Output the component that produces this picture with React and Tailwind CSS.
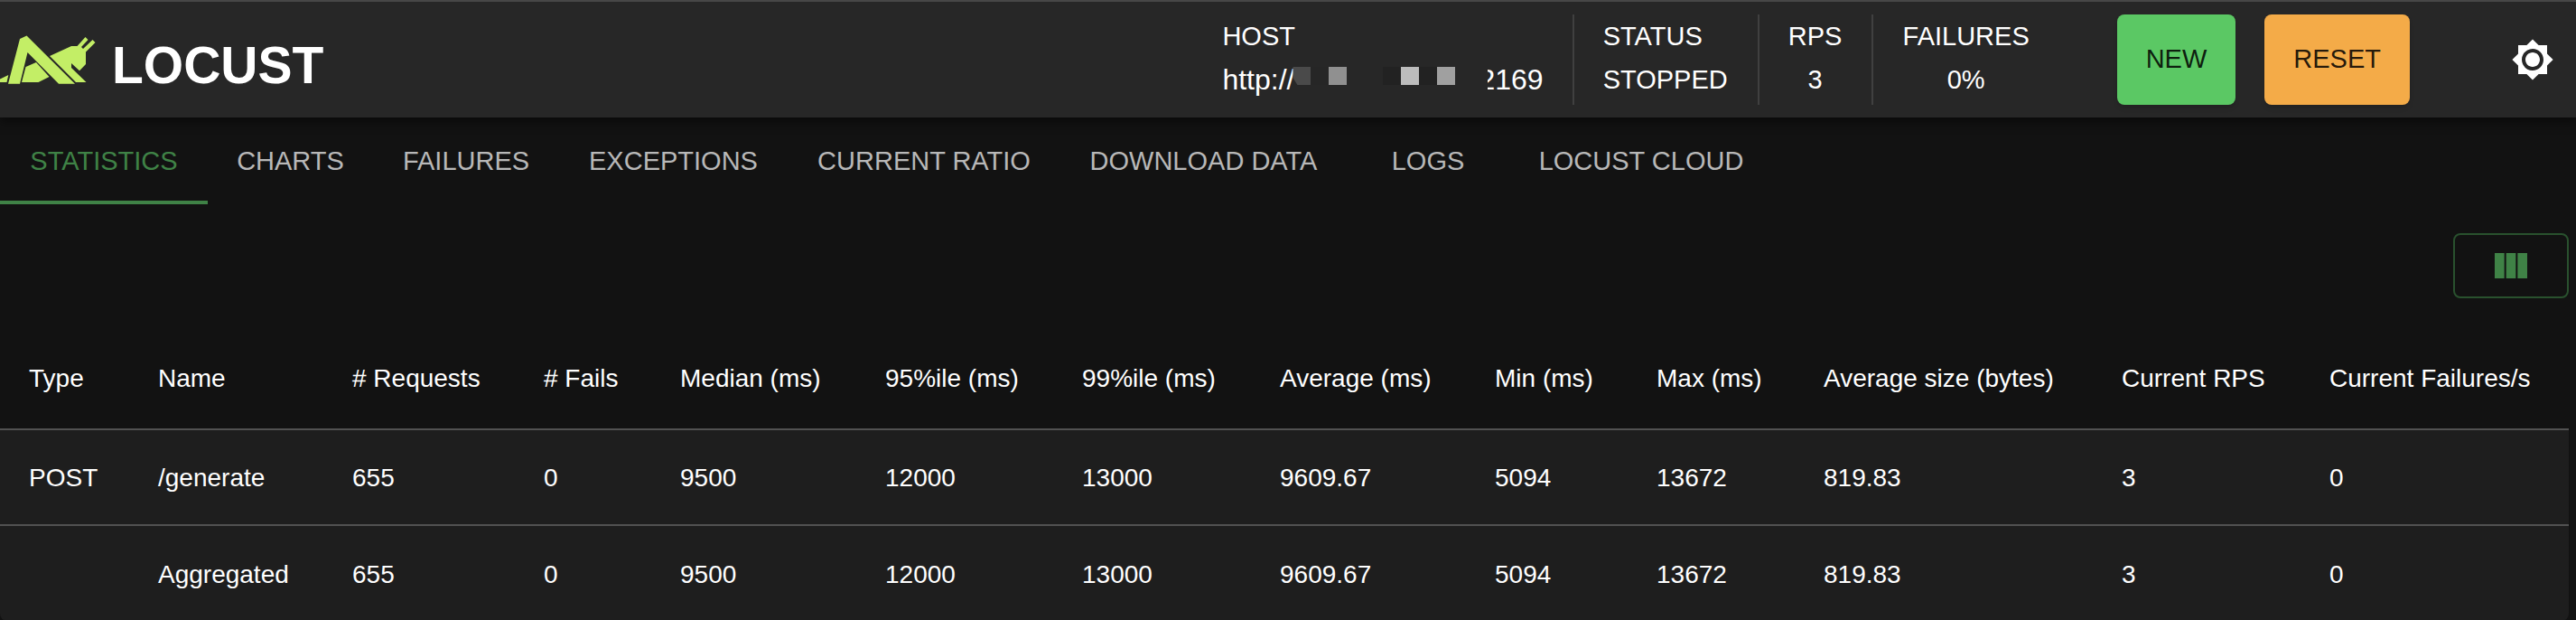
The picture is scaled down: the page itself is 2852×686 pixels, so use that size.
const tabs = [
  { label: 'Statistics', width: 'w-[230px]' },
  { label: 'Charts', width: 'w-[183px]' },
  { label: 'Failures', width: 'w-[206px]' },
  { label: 'Exceptions', width: 'w-[253px]' },
  { label: 'Current ratio', width: 'w-[302px]' },
  { label: 'Download data', width: 'w-[317px]' },
  { label: 'Logs', width: 'w-[180px]' },
  { label: 'Locust Cloud', width: 'w-[292px]' },
];

const columns = [
  { label: 'Type', width: 'w-[143px]' },
  { label: 'Name', width: 'w-[215px]' },
  { label: '# Requests', width: 'w-[212px]' },
  { label: '# Fails', width: 'w-[151px]' },
  { label: 'Median (ms)', width: 'w-[227px]' },
  { label: '95%ile (ms)', width: 'w-[218px]' },
  { label: '99%ile (ms)', width: 'w-[219px]' },
  { label: 'Average (ms)', width: 'w-[238px]' },
  { label: 'Min (ms)', width: 'w-[179px]' },
  { label: 'Max (ms)', width: 'w-[185px]' },
  { label: 'Average size (bytes)', width: 'w-[330px]' },
  { label: 'Current RPS', width: 'w-[230px]' },
  { label: 'Current Failures/s', width: 'w-[297px]' },
];

const stats = ['655', '0', '9500', '12000', '13000', '9609.67', '5094', '13672', '819.83', '3', '0'];
const rows = [
  ['POST', '/generate', ...stats],
  ['', 'Aggregated', ...stats],
];

const maskBlocks = [
  'bg-[#4a4a4a] [clip-path:polygon(0_0,100%_0,100%_100%,25%_100%,0_60%)]',
  'bg-[#262626]',
  'bg-[#909090]',
  '',
  '',
  'bg-[#222222]',
  'bg-[#bcbcbc]',
  'bg-[#222222]',
  'bg-[#a0a0a0]',
];

function Logo() {
  return (
    <a href="#" className="flex items-center gap-4 text-white">
      <svg viewBox="0 0 108 56" className="h-14 w-[108px]" fill="#c3ee66" aria-hidden="true">
        <path d="M0 49.500L9.300 45L7.500 53H0Z" />
        <path d="M22 5L29.500 1.500L83 54.700H65L30.500 20L22 54.700H9Z" />
        <path d="M28.500 36L40 31L54.500 47L42.500 53H24Z" />
        <path d="M55 24L79 13H85.500L94.500 3L97.500 6L90 14L92 16L102.500 6L105.500 9L95 19.500V33L88 40.300L79 32V37L95.500 53H84Z" />
      </svg>
      <span className="pt-3 text-[57px] leading-none font-bold">LOCUST</span>
    </a>
  );
}

function Stat({ label, align = 'items-center', width, children }) {
  return (
    <div className={`flex flex-col gap-2 border-l-2 border-[#404040] px-8 pt-1 text-[29px] leading-10 uppercase ${align} ${width}`}>
      <span>{label}</span>
      <span>{children}</span>
    </div>
  );
}

export default function App() {
  return (
    <div className="min-h-screen bg-[#121212] font-['Liberation_Sans',Arial,sans-serif] text-white">
      <header className="relative flex h-[130px] items-center justify-between border-t-2 border-[#474747] bg-[#272727] pr-2 shadow-[0_4px_10px_rgba(0,0,0,0.5)]">
        <Logo />
        <div className="flex items-center">
          <div className="flex h-[100px]">
            <div className="flex flex-col gap-2 pt-1 pr-8">
              <span className="text-[29px] leading-10">HOST</span>
              <span className="flex items-center text-[32px] leading-10">
                http://
                <span className="-ml-0.5 mb-2 flex">
                  {maskBlocks.map((block, i) => (
                    <span key={i} className={`size-5 ${block}`} />
                  ))}
                </span>
                <span className="relative ml-[26px]">
                  2169
                  <span className="absolute inset-y-0 left-0 w-2.5 bg-[#272727]" />
                </span>
              </span>
            </div>
            <Stat label="Status" align="items-start" width="w-[205px]">Stopped</Stat>
            <Stat label="RPS" width="w-[126px]">3</Stat>
            <Stat label="Failures" width="w-[208px]">0%</Stat>
          </div>
          <div className="ml-16 flex gap-8 text-[29px] text-black/87">
            <button type="button" className="h-[100px] rounded-lg bg-[#5bc864] px-8 shadow-md">NEW</button>
            <button type="button" className="h-[100px] rounded-lg bg-[#f4ab48] px-8 shadow-md">RESET</button>
          </div>
          <button type="button" aria-label="Toggle theme" className="ml-24 p-4">
            <svg viewBox="0 0 24 24" className="size-12" fill="currentColor">
              <path d="M20 8.69V4h-4.69L12 .69 8.69 4H4v4.69L.69 12 4 15.31V20h4.69L12 23.31 15.31 20H20v-4.69L23.31 12 20 8.69zM12 18c-3.31 0-6-2.69-6-6s2.69-6 6-6 6 2.69 6 6-2.69 6-6 6zm0-10c-2.21 0-4 1.79-4 4s1.79 4 4 4 4-1.79 4-4-1.79-4-4-4z" />
            </svg>
          </button>
        </div>
      </header>

      <nav className="flex h-24 text-[29px]">
        {tabs.map(({ label, width }, i) => (
          <button
            key={label}
            type="button"
            className={`shrink-0 border-b-4 pt-1.5 whitespace-nowrap uppercase ${width} ${
              i === 0 ? 'border-b-[#3f8246] text-[#3f8246]' : 'border-b-transparent text-[#b8b8b8]'
            }`}
          >
            {label}
          </button>
        ))}
      </nav>

      <main className="pt-8 pr-2">
        <div className="flex justify-end">
          <button type="button" aria-label="Select columns" className="flex h-[72px] w-32 items-center justify-center rounded-lg border-2 border-[#29512e] text-[#3f8246]">
            <svg viewBox="0 0 24 24" className="size-12" fill="currentColor">
              <path d="M14.670 5v14H9.330V5zm1 14H21V5h-5.330zm-7.340 0V5H3v14z" />
            </svg>
          </button>
        </div>
        <div className="mt-8 overflow-hidden rounded-lg">
          <table className="w-full table-fixed text-left text-[28px] whitespace-nowrap">
            <thead>
              <tr className="h-[113px] border-b-2 border-[#515151]">
                {columns.map(({ label, width }) => (
                  <th key={label} scope="col" className={`pt-0.5 pl-8 font-normal ${width}`}>{label}</th>
                ))}
              </tr>
            </thead>
            <tbody className="bg-[#1e1e1e]">
              {rows.map((row) => (
                <tr key={row[1]} className="h-[106px] border-b-2 border-[#515151] last:border-b-0">
                  {row.map((cell, i) => (
                    <td key={columns[i].label} className="pt-0.5 pl-8">{cell}</td>
                  ))}
                </tr>
              ))}
            </tbody>
          </table>
        </div>
      </main>
    </div>
  );
}
